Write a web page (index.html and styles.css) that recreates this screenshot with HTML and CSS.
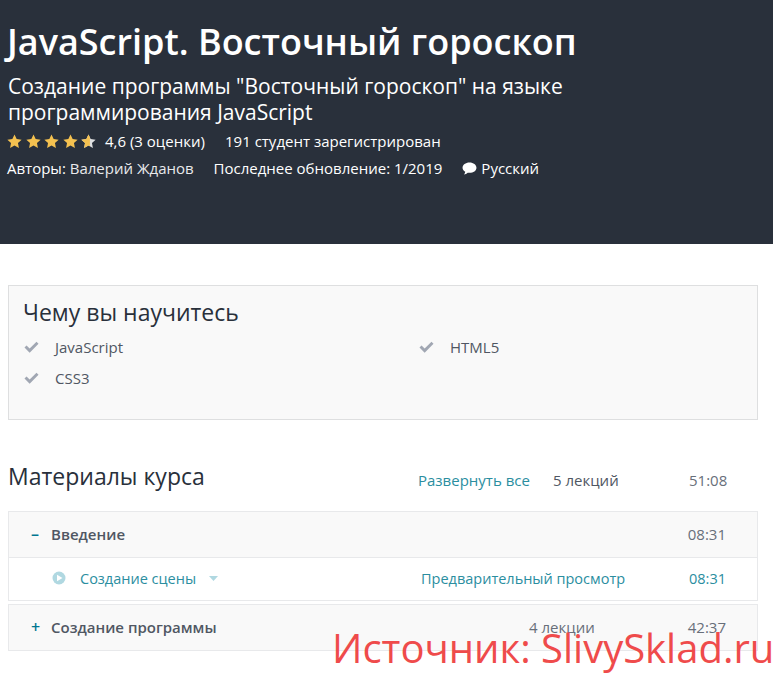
FILE: index.html
```html
<!DOCTYPE html>
<html lang="ru">
<head>
<meta charset="utf-8">
<title>JavaScript. Восточный гороскоп</title>
<link rel="stylesheet" href="styles.css">
</head>
<body>
<header class="hero">
  <h1 class="hero-title">JavaScript. Восточный гороскоп</h1>
  <p class="hero-sub">Создание программы "Восточный гороскоп" на языке программирования JavaScript</p>
  <div class="hero-row rating-row">
    <span class="stars">
      <svg class="star" viewBox="0 0 16 16"><path fill="#f4c150" d="M8 .5l2.300 4.800 5.300.7-3.900 3.600 1 5.200L8 12.200l-4.700 2.600 1-5.200L.4 6l5.300-.7z"/></svg>
      <svg class="star" viewBox="0 0 16 16"><path fill="#f4c150" d="M8 .5l2.300 4.800 5.300.7-3.900 3.600 1 5.200L8 12.200l-4.700 2.600 1-5.200L.4 6l5.300-.7z"/></svg>
      <svg class="star" viewBox="0 0 16 16"><path fill="#f4c150" d="M8 .5l2.300 4.800 5.300.7-3.900 3.600 1 5.200L8 12.200l-4.700 2.600 1-5.200L.4 6l5.300-.7z"/></svg>
      <svg class="star" viewBox="0 0 16 16"><path fill="#f4c150" d="M8 .5l2.300 4.800 5.300.7-3.900 3.600 1 5.200L8 12.200l-4.700 2.600 1-5.200L.4 6l5.300-.7z"/></svg>
      <svg class="star" viewBox="0 0 16 16"><path fill="#dedfe0" d="M8 .5l2.300 4.800 5.300.7-3.900 3.600 1 5.200L8 12.200l-4.700 2.600 1-5.200L.4 6l5.300-.7z"/><path fill="#f4c150" d="M8 .5L9.500 3.630V13.030L8 12.200l-4.700 2.600 1-5.200L.4 6l5.300-.7z"/></svg>
    </span>
    <span class="rating-text">4,6 (3 оценки)</span>
    <span>191 студент зарегистрирован</span>
  </div>
  <div class="hero-row meta-row">
    <span>Авторы: <span class="author">Валерий Жданов</span></span>
    <span>Последнее обновление: 1/2019</span>
    <span class="lang">
      <svg class="bubble" viewBox="0 0 16 14"><path fill="#fff" d="M8 .5c4.200 0 7.500 2.500 7.500 5.600S12.200 11.700 8 11.700c-.7 0-1.300-.1-1.900-.2C5 12.500 3.600 13.200 2 13.500c.8-.9 1.300-1.900 1.400-3C1.700 9.500.500 7.900.500 6.100.500 3 3.800.500 8 .500z"/></svg>
      Русский
    </span>
  </div>
</header>

<main class="content">
  <section class="learn">
    <h2 class="learn-title">Чему вы научитесь</h2>
    <ul class="learn-list">
      <li class="learn-item"><svg class="check" viewBox="0 0 16 13"><path fill="#a1a7b3" d="M6 12.600.4 7l2.200-2.200L6 8.200 13.400.8 15.600 3z"/></svg>JavaScript</li>
      <li class="learn-item"><svg class="check" viewBox="0 0 16 13"><path fill="#a1a7b3" d="M6 12.600.4 7l2.200-2.200L6 8.200 13.400.8 15.600 3z"/></svg>HTML5</li>
      <li class="learn-item"><svg class="check" viewBox="0 0 16 13"><path fill="#a1a7b3" d="M6 12.600.4 7l2.200-2.200L6 8.200 13.400.8 15.600 3z"/></svg>CSS3</li>
    </ul>
  </section>

  <section class="course">
    <div class="course-head">
      <h2 class="course-title">Материалы курса</h2>
      <div class="course-stats">
        <a class="expand">Развернуть все</a>
        <span class="count">5 лекций</span>
        <span class="total">51:08</span>
      </div>
    </div>
    <div class="chapter">
      <div class="chapter-head">
        <span class="toggle">–</span>
        <span class="chapter-name">Введение</span>
        <span class="chapter-time">08:31</span>
      </div>
      <div class="lesson">
        <svg class="play" viewBox="0 0 14 14"><circle cx="7" cy="7" r="6.500" fill="#b0d8e1"/><path fill="#fff" d="M5 3.700 10.500 7 5 10.300z"/></svg>
        <a class="lesson-name">Создание сцены</a>
        <svg class="caret" viewBox="0 0 9 5"><path fill="#b0d8e1" d="M0 0h9L4.500 5z"/></svg>
        <a class="preview">Предварительный просмотр</a>
        <span class="lesson-time">08:31</span>
      </div>
    </div>
    <div class="chapter">
      <div class="chapter-head">
        <span class="toggle">+</span>
        <span class="chapter-name">Создание программы</span>
        <span class="chapter-count">4 лекции</span>
        <span class="chapter-time">42:37</span>
      </div>
    </div>
  </section>
</main>
<div class="watermark">Источник: SlivySklad.ru</div>
</body>
</html>
```
FILE: styles.css
```css
* { box-sizing: border-box; }
html, body { margin: 0; padding: 0; }
body {
  position: relative;
  height: 673px;
  overflow: hidden;
  background: #fff;
  font-family: "Open Sans", "Noto Sans", sans-serif;
  color: #29303b;
}
.hero {
  height: 244px;
  background: #29303b;
  color: #fff;
  padding: 18px 7px 0;
}
.hero-title {
  margin: 0;
  font-size: 36px;
  line-height: 48px;
  font-weight: 600;
}
.hero-sub {
  margin: 7px 0 0 1px;
  width: 600px;
  font-size: 21px;
  line-height: 26px;
  font-weight: 400;
}
.hero-row {
  display: flex;
  align-items: center;
  font-size: 15px;
}
.rating-row { margin-top: 4px; height: 24px; }
.meta-row { margin-top: 3px; height: 24px; gap: 20px; }
.stars { display: flex; gap: 3.500px; width: 98px; }
.star { width: 15px; height: 15px; display: block; }
.rating-text { width: 120px; }
.author { color: #e8e9eb; }
.lang { display: flex; align-items: center; gap: 4px; }
.bubble { width: 15px; height: 13px; display: block; }
.content { padding: 41px 15px 0 8px; }
.learn {
  height: 135px;
  background: #f9f9f9;
  border: 1px solid #dedfe0;
  padding: 11px 15px 0;
}
.learn-title {
  margin: 0 0 0 -1px;
  font-size: 23px;
  line-height: 30px;
  font-weight: 400;
}
.learn-list {
  list-style: none;
  margin: 4px 0 0;
  padding: 0;
  display: grid;
  grid-template-columns: 395px 1fr;
  grid-auto-rows: 31px;
}
.learn-item {
  display: flex;
  align-items: center;
  font-size: 15px;
  color: #505763;
  height: 31px;
}
.check { width: 15px; height: 12px; margin-right: 16px; display: block; }
.course { margin-top: 36px; }
.course-head {
  display: flex;
  align-items: center;
  height: 40px;
  font-size: 15px;
  margin-bottom: 15px;
}
.course-title {
  margin: 0;
  width: 410px;
  font-size: 23px;
  font-weight: 400;
}
.course-stats { display: flex; padding-top: 7px; }
.expand { color: #2b8e9f; width: 135px; }
.count { color: #505763; width: 136px; }
.total { color: #686f7a; }
.chapter {
  border: 1px solid #e8e9eb;
  margin-bottom: 3px;
}
.chapter-head {
  display: flex;
  align-items: center;
  height: 45px;
  padding: 0 31px 2px 22px;
  background: #f9f9f9;
  font-size: 15px;
}
.toggle { width: 20px; color: #007791; font-weight: 600; font-size: 16px; }
.chapter-name { flex: 1; color: #505763; font-weight: 600; }
.chapter-count { color: #686f7a; margin-right: 93px; }
.chapter-time { color: #686f7a; }
.lesson {
  display: flex;
  align-items: center;
  height: 43px;
  padding: 0 31px 2px 43px;
  border-top: 1px solid #e8e9eb;
  font-size: 14.500px;
  color: #2b8e9f;
}
.play { width: 14px; height: 14px; display: block; margin-right: 14px; }
.lesson-name { width: 129px; }
.caret { width: 9px; height: 5px; display: block; margin-right: 203px; }
.preview { flex: 1; }
.lesson-time { font-size: 14.500px; }
.watermark {
  position: absolute;
  left: 332px;
  top: 623px;
  font-family: "Open Sans", sans-serif;
  font-size: 40px;
  line-height: 50px;
  color: #ef4b4b;
  white-space: nowrap;
}
```
